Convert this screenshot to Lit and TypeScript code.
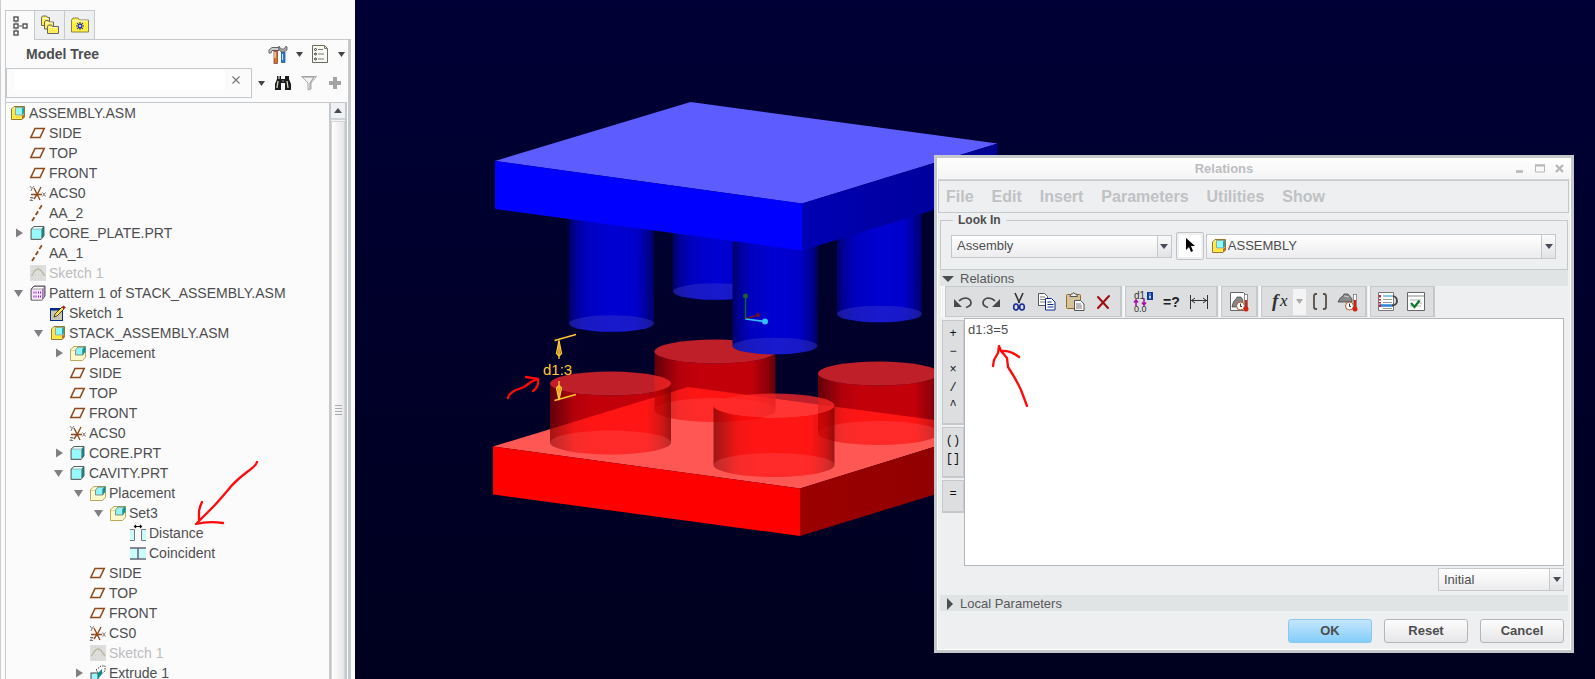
import { LitElement, html, svg, css, nothing } from "lit";
import { customElement, property, state } from "lit/decorators.js";

const asmCube = svg`
  <path d="M2.500 5L5 2.500H15.500V13L13 15.500H2.500Z" fill="#fff27a" stroke="#8a6a1c" stroke-width=".9"/>
  <path d="M3.500 6V14.500H12.500V12H6V5Z" fill="#ffe63a"/>
  <path d="M6.500 3.500H14V11H6.500Z" fill="#8ff8fa" stroke="#777" stroke-width=".6"/>
  <path d="M13 4.500L15 2.500V9.500L13 11Z" fill="#2aa3a6"/>
  <path d="M13 12L15.500 10V13L13 15.500Z" fill="#c06a24"/>`;
const placeCube = svg`
  <path d="M1.500 5.500L5 2.500H16.500V13L13.500 16.500H1.500Z" fill="#fdf9cf" stroke="#b9a75c"/>
  <path d="M6.500 6L9 3H16L14 5.500V11H6.500Z" fill="#8ff3f5" stroke="#666" stroke-width=".7"/>
  <path d="M13.500 5L16.500 2V8L13.500 11Z" fill="#158f94"/>
  <path d="M2 6.500H6" stroke="#e4d98a"/>`;

const treeIcons: Record<string, unknown> = {
  asm: asmCube,
  place: placeCube,
  plane: svg`<path d="M1.800 13.500L6 4.500H15.200L11 13.500Z" fill="none" stroke="#8f4a1c" stroke-width="1.600"/>`,
  csys: svg`
    <path d="M2 10.500H13M5 4L11 16M12 3L9 9L5 15" fill="none" stroke="#8f4a1c" stroke-width="1.400"/>
    <path d="M1 2l2 2.500l2-2.500M3 4.500l-1 2.500M13.500 8.500l3 4M16.500 8.500l-3 4M1 13.500h3l-3 3h3" fill="none" stroke="#6c6c6c" stroke-width=".9"/>`,
  axis: svg`<path d="M3 17L13 1" stroke="#8f4a1c" stroke-width="1.800" stroke-dasharray="4.500 2.500" fill="none"/>`,
  part: svg`
    <path d="M2 5L5 2.500H15V12L12 15.500H2Z" fill="#128a8e" stroke="#555" stroke-width=".9"/>
    <path d="M3 5L5 3H14L12.500 5Z" fill="#eaffff"/>
    <rect x="2.500" y="5" width="10" height="10" fill="#97fafa" stroke="#888" stroke-width=".6"/>`,
  sketchOff: svg`
    <rect x="1" y="1" width="16" height="16" fill="#dededc"/>
    <path d="M3 3h12M3 7h12M3 11h12M3 15h12" stroke="#c9c9c4" stroke-dasharray="1 2"/>
    <path d="M2.500 12L6 6.500Q9 3.500 12 6.500L16 12" fill="none" stroke="#b8b8a0" stroke-width="1.300"/>`,
  pattern: svg`
    <path d="M2 5L5 2H16V12L13 16H2Z" fill="#b98ad6" stroke="#555"/>
    <path d="M3 5L5 3H15L13 5Z" fill="#fff"/>
    <rect x="2.500" y="5" width="11" height="11" fill="#f9e6ff" stroke="#777" stroke-width=".7"/>
    <path d="M4.500 8.500h3M9 8.500h3M4.500 12.500h3M9 12.500h3" stroke="#8a20d8" stroke-width="2" stroke-dasharray="1 1"/>`,
  sketch: svg`
    <rect x="1.500" y="5" width="12" height="11.500" fill="#c9c9b6" stroke="#0a2a88"/>
    <rect x="1" y="4" width="13" height="2.500" fill="#0a2a88"/>
    <path d="M5 13L6 10L13 3L15 5L8 12Z" fill="#ffe14a" stroke="#222" stroke-width=".8"/>
    <path d="M13 3L14.500 1.500L17 3.500L15 5Z" fill="#b0202a"/>`,
  distance: svg`
    <rect x="1" y="5" width="4" height="12" fill="#c9fbfb"/><rect x="13" y="5" width="4" height="12" fill="#c9fbfb"/>
    <path d="M1 5.500h4.500v11M17 5.500h-4.500v11M1 16.500h4.500M12.500 16.500h4.500" fill="none" stroke="#777"/>
    <path d="M5 2.500h8M7 1L5.500 2.500L7 4M11 1L12.500 2.500L11 4" fill="none" stroke="#111" stroke-width="1.100"/>`,
  coincident: svg`
    <rect x="1" y="4" width="16" height="11" fill="#c9fbfb"/>
    <path d="M1 4h16M1 15h16M9 4v11" stroke="#667" fill="none" stroke-width="1.500"/>`,
  extrude: svg`
    <path d="M7 6L12 2H16V7L11 11Z" fill="#fff" stroke="#444" stroke-dasharray="1.500 1"/>
    <rect x="2" y="9" width="7" height="8" fill="#97fafa" stroke="#444"/>
    <path d="M9 9L13 5V10L9 15Z" fill="#128a8e"/>`,
};

type Node = { level: number; icon: string; label: string; open?: boolean; off?: boolean };
const nodes: Node[] = [
  { level: 0, icon: "asm", label: "ASSEMBLY.ASM" },
  { level: 1, icon: "plane", label: "SIDE" },
  { level: 1, icon: "plane", label: "TOP" },
  { level: 1, icon: "plane", label: "FRONT" },
  { level: 1, icon: "csys", label: "ACS0" },
  { level: 1, icon: "axis", label: "AA_2" },
  { level: 1, icon: "part", label: "CORE_PLATE.PRT", open: false },
  { level: 1, icon: "axis", label: "AA_1" },
  { level: 1, icon: "sketchOff", label: "Sketch 1", off: true },
  { level: 1, icon: "pattern", label: "Pattern 1 of STACK_ASSEMBLY.ASM", open: true },
  { level: 2, icon: "sketch", label: "Sketch 1" },
  { level: 2, icon: "asm", label: "STACK_ASSEMBLY.ASM", open: true },
  { level: 3, icon: "place", label: "Placement", open: false },
  { level: 3, icon: "plane", label: "SIDE" },
  { level: 3, icon: "plane", label: "TOP" },
  { level: 3, icon: "plane", label: "FRONT" },
  { level: 3, icon: "csys", label: "ACS0" },
  { level: 3, icon: "part", label: "CORE.PRT", open: false },
  { level: 3, icon: "part", label: "CAVITY.PRT", open: true },
  { level: 4, icon: "place", label: "Placement", open: true },
  { level: 5, icon: "place", label: "Set3", open: true },
  { level: 6, icon: "distance", label: "Distance" },
  { level: 6, icon: "coincident", label: "Coincident" },
  { level: 4, icon: "plane", label: "SIDE" },
  { level: 4, icon: "plane", label: "TOP" },
  { level: 4, icon: "plane", label: "FRONT" },
  { level: 4, icon: "csys", label: "CS0" },
  { level: 4, icon: "sketchOff", label: "Sketch 1", off: true },
  { level: 4, icon: "extrude", label: "Extrude 1", open: false },
];

const base = css`
  :host, :host * { box-sizing: border-box; }
  :host { font-family: "Liberation Sans", Arial, sans-serif; color: #4d4d4f; }
  button { font: inherit; color: inherit; border: 0; padding: 0; margin: 0; background: none; display: flex; align-items: center; justify-content: center; }
  svg { display: block; }
`;

@customElement("model-tree")
class ModelTree extends LitElement {
  @state() private query = "";

  static styles = [base, css`
    :host { display: flex; flex-direction: column; height: 100%; background: #fbfbfb; border-left: 1px solid #c9cdd0; padding: 10px 4px 0; overflow: hidden; }
    .tabs { display: flex; height: 29px; flex: none; }
    .tab { width: 30px; height: 29px; border: 1px solid #c5c9cc; border-bottom: 0; border-left-width: 0; background: #eeeff1; }
    .tab.on { border-left-width: 1px; background: #fbfbfb; height: 30px; z-index: 1; }
    .frame { flex: 1; min-height: 0; display: flex; flex-direction: column; border: 1px solid #c5c9cc; border-right-width: 3px; border-bottom: 0; }
    .head { display: flex; align-items: center; height: 28px; flex: none; padding-left: 20px; }
    h2 { font-size: 14px; line-height: 20px; margin: 0; flex: 1; }
    .find { display: flex; align-items: center; height: 34px; flex: none; padding-bottom: 4px; }
    .box { flex: 1; min-width: 0; display: flex; height: 30px; border: 1px solid #c5c9cc; padding: 1px 5px 7px 7px; }
    .box input { flex: 1; min-width: 0; border: 0; outline: 0; background: #fff; font: 14px "Liberation Sans", sans-serif; }
    .box button { width: 21px; }
    .tool { width: 26px; height: 24px; }
    .drop { width: 18px; height: 24px; }
    .head .tool { width: 28px; }
    .head .drop { width: 14px; }
    .body { flex: 1; min-height: 0; display: flex; border: 1px solid #c5c9cc; border-width: 1px 2px 0 0; margin-right: 1px; }
    ul { list-style: none; margin: 0; padding: 0; flex: 1; min-width: 0; overflow: hidden; font-size: 14px; line-height: 20px; }
    li { display: flex; align-items: center; height: 20px; white-space: nowrap; }
    .twist { width: 20px; height: 20px; flex: none; }
    .icon { flex: none; margin-right: 2px; }
    .off { color: #bcbcbe; }
    .bar { width: 16px; flex: none; display: flex; flex-direction: column; border-left: 2px solid #c5c9cc; background: #f4f4f5; }
    .up { height: 17px; flex: none; background: #f0f1f2; border: 1px solid #d0d3d5; border-width: 0 0 2px; }
    .thumb { flex: 1; display: flex; align-items: center; justify-content: center; padding-top: 20px; margin-top: 1px; border: 1px solid #d2d4d6; border-bottom: 0; background: linear-gradient(90deg, #fff, #e6e6e8); }
  `];

  render() {
    return html`
      <div class="tabs" role="tablist">
        <button class="tab on" role="tab" aria-label="Model tree">
          <svg width="18" height="20" fill="none" stroke="#444" stroke-width="1.300"><rect x="3" y="1" width="4" height="4"/><rect x="3" y="8" width="4" height="4"/><rect x="3" y="15" width="4" height="4"/><rect x="12" y="8" width="4" height="4"/><path d="M5 5v3M5 12v3M7 10h5" stroke="#888"/></svg>
        </button>
        <button class="tab" role="tab" aria-label="Folders">
          <svg width="20" height="20" fill="#ffed5a" stroke="#666"><path d="M1.500 10.500v-8l1-1.500h4l1 1.500h2v8z"/><path d="M4.500 14v-7l1-1.500h3l1 1.500h4v7z"/><path d="M7.500 18.500v-7l1-1.500h3l1 1.500h6v7z"/><path d="M8.500 12.500h9M5.500 8h7M2.500 3.500h6" stroke="#fffbd0"/></svg>
        </button>
        <button class="tab" role="tab" aria-label="Favorites">
          <svg width="18" height="18" fill="#fff23c" stroke="#8d8244"><path d="M.5 16v-12l1.500-2h5l1.500 2h9v12z"/><path d="M1.500 5h15" stroke="#fff"/><path d="M9 6v8M5 10h8M6.200 7.200l5.600 5.600M11.800 7.200l-5.600 5.600" stroke="#1420b8" stroke-width="1.100"/><circle cx="9" cy="10" r="1" fill="#fff" stroke="none"/></svg>
        </button>
      </div>
      <div class="frame">
        <div class="head">
          <h2>Model Tree</h2>
          <button class="tool" aria-label="Settings">
            <svg width="20" height="20"><path d="M1 6l3-2.500h7v3H4L3 9H1z" fill="#ccc" stroke="#555" stroke-width=".9"/><path d="M11 2l2 3h3l2-3 1 1v3l-3 2h-3l-2-3z" fill="#aaa" stroke="#555" stroke-width=".8"/><rect x="6" y="7" width="3.500" height="12.500" fill="#d8731f" stroke="#733" stroke-width=".7"/><path d="M7 8v6" stroke="#fff"/><rect x="13.500" y="8.500" width="3.500" height="10" fill="#2c7fd8" stroke="#124a8a" stroke-width=".7"/><path d="M14.500 10v6" stroke="#bfe0ff"/></svg>
          </button>
          <button class="drop" aria-label="Settings menu"><svg width="7" height="5"><path d="M0 0h7L3.500 5z" fill="#444"/></svg></button>
          <button class="tool" aria-label="Show">
            <svg width="18" height="20"><path d="M1.500 1.500h12l3 3v14h-15z" fill="#fafaf5" stroke="#6a6a60"/><path d="M13.500 1.500v3h3M7 5.500h5M7 10h6M7 15h6" fill="none" stroke="#777"/><g fill="none" stroke="#333"><circle cx="4.500" cy="5.500" r="1"/><circle cx="4.500" cy="10" r="1"/><circle cx="4.500" cy="15" r="1"/></g></svg>
          </button>
          <button class="drop" aria-label="Show menu"><svg width="7" height="5"><path d="M0 0h7L3.500 5z" fill="#444"/></svg></button>
        </div>
        <div class="find">
          <div class="box">
            <input aria-label="Search the tree" .value=${this.query} @input=${(e: InputEvent) => (this.query = (e.target as HTMLInputElement).value)}>
            <button aria-label="Clear" @click=${() => (this.query = "")}><svg width="8" height="8"><path d="M.5 .5l7 7M7.500 .5l-7 7" stroke="#777" stroke-width="1.200"/></svg></button>
          </div>
          <button class="drop" aria-label="Search menu"><svg width="7" height="5"><path d="M0 0h7L3.500 5z" fill="#444"/></svg></button>
          <button class="tool" aria-label="Find">
            <svg width="18" height="16"><path d="M3 1h4v3h4V1h4v3l2 5v6h-6V8H7v7H1V9l2-5z" fill="#1c1c1c"/><path d="M4 6L3 13M13 6l1 7M5 1v3" stroke="#d8d8c8" stroke-width="1.300"/><path d="M8 6h2" stroke="#999"/></svg>
          </button>
          <button class="tool" aria-label="Filter">
            <svg width="18" height="16"><path d="M1.500 1.500h15L11 8v6l-3 1V8z" fill="#f2f2f2" stroke="#aaa"/><path d="M3 2h11L10 8v6" fill="none" stroke="#999"/></svg>
          </button>
          <button class="tool" aria-label="Add"><svg width="12" height="12"><path d="M4 0h4v4h4v4H8v4H4V8H0V4h4z" fill="#a3a3a3"/></svg></button>
        </div>
        <div class="body">
          <ul role="tree" aria-label="Model Tree">
            ${nodes.map(n => html`
              <li role="treeitem" aria-level=${n.level + 1} class=${n.off ? "off" : ""} style="padding-left:${3 + 20 * Math.max(0, n.level - 1)}px">
                ${n.level ? html`<span class="twist">${n.open === undefined ? nothing : html`
                  <svg width="20" height="20"><path d=${n.open ? "M5 7h9L9.500 14z" : "M7 5.500v9l7-4.500z"} fill="#808084"/></svg>`}</span>` : nothing}
                <svg class="icon" width="18" height="18">${treeIcons[n.icon]}</svg>
                <span>${n.label}</span>
              </li>`)}
          </ul>
          <div class="bar">
            <button class="up" aria-label="Scroll up"><svg width="8" height="5"><path d="M0 5h8L4 0z" fill="#4a4a55"/></svg></button>
            <div class="thumb"><svg width="7" height="11"><path d="M0 .5h7M0 3.500h7M0 6.500h7M0 9.500h7" stroke="#a9abad"/></svg></div>
          </div>
        </div>
      </div>`;
  }
}

const pin = (x: number, y: number) => {
  const w = 85, m = x + w / 2;
  return svg`
    <path d="M${x} 198V${y}A${w / 2} 8.300 0 0 0 ${x + w} ${y}V198Z" fill="url(#pin)"/>
    <ellipse cx=${m} cy=${y} rx=${w / 2} ry="8.300" fill="#3c3cc8" fill-opacity=".42"/>`;
};
const boss = (x: number, top: number, bottom: number) => {
  const w = 121, m = x + w / 2;
  return svg`
    <path d="M${x} ${top}V${bottom}A${w / 2} 12 0 0 0 ${x + w} ${bottom}V${top}A${w / 2} 12 0 0 1 ${x} ${top}Z" fill="url(#boss)"/>
    <ellipse cx=${m} cy=${bottom} rx=${w / 2} ry="12" fill="#ff6a6a" fill-opacity=".26"/>
    <ellipse cx=${m} cy=${top} rx=${w / 2} ry="12" fill="#ff2a2a" fill-opacity=".75"/>`;
};

@customElement("model-view")
class ModelView extends LitElement {
  static styles = [base, css`
    :host { display: block; height: 100%; overflow: hidden; background: linear-gradient(#000036, #00001e); }
    .scene { width: 100%; height: 100%; }
    .dim { font-size: 15px; }
  `];
  render() {
    return html`
      <svg class="scene" viewBox="355 0 1240 679" preserveAspectRatio="xMinYMin slice" role="img" aria-label="Mold assembly with dimension d1:3">
        <defs>
          <linearGradient id="pin">
            <stop offset="0" stop-color="#00006a"/><stop offset=".1" stop-color="#0000a0"/><stop offset=".22" stop-color="#0000c0"/>
            <stop offset=".5" stop-color="#0000d2"/><stop offset=".78" stop-color="#0000cc"/><stop offset=".92" stop-color="#000098"/><stop offset="1" stop-color="#000060"/>
          </linearGradient>
          <linearGradient id="boss">
            <stop offset="0" stop-color="#800000" stop-opacity=".75"/><stop offset=".2" stop-color="#ee0000" stop-opacity=".75"/>
            <stop offset=".35" stop-color="#ff0000" stop-opacity=".76"/><stop offset=".8" stop-color="#ff0000" stop-opacity=".76"/>
            <stop offset=".93" stop-color="#c00000" stop-opacity=".75"/><stop offset="1" stop-color="#7c0000" stop-opacity=".75"/>
          </linearGradient>
          <linearGradient id="blueSide"><stop offset="0" stop-color="#0000b4"/><stop offset="1" stop-color="#000090"/></linearGradient>
          <linearGradient id="redSide"><stop offset="0" stop-color="#9c0000"/><stop offset="1" stop-color="#8c0000"/></linearGradient>
        </defs>
        <path d="M493 446.500L688 387L995 428L800 488.500Z" fill="#ff5854"/>
        <path d="M493 446.500L800 488.500V536L493 494.500Z" fill="#f00"/>
        <path d="M800 488.500L995 428V476L800 536Z" fill="url(#redSide)"/>
        ${boss(654.5, 351.5, 410)}
        ${boss(818, 373.5, 433)}
        ${boss(550, 383.5, 442.5)}
        ${boss(713.5, 405.5, 465)}
        ${pin(673, 291.5)}
        ${pin(837, 314)}
        ${pin(569, 323.5)}
        ${pin(732.5, 346)}
        <path d="M495 161L690.500 102L997.500 143.500L802 203.500Z" fill="#5c5cff"/>
        <path d="M495 161L802 203.500V250.500L495 209Z" fill="#00f"/>
        <path d="M802 203.500L997.500 143.500V190.500L802 250.500Z" fill="url(#blueSide)"/>
        <path d="M745.500 296V319" stroke="#146428" stroke-width="1.500"/><circle cx="745.500" cy="296" r="2.500" fill="#146428"/>
        <path d="M745.500 319L758 315" stroke="#701020" stroke-width="1.500"/><circle cx="758" cy="315" r="2" fill="#701020"/>
        <path d="M745.500 319L765 321.500" stroke="#30c0ff" stroke-width="1.500"/><circle cx="765" cy="321.500" r="3" fill="#30c0ff"/>
        <g stroke="#ffc832" stroke-width="1.300" fill="none">
          <path d="M554.500 340.500L576 334.500M559 340.500V359M554.500 400.500L576 394.500M559 381V400"/>
          <path d="M559 340.500l-2.500 13l2.500 2.500l2.500-2.500zM559 400l-2.500-12l2.500-2.500l2.500 2.500z" fill="#ffc832" fill-opacity=".5"/>
        </g>
        <text class="dim" x="543" y="375" fill="#ffc832">d1:3</text>
      </svg>`;
  }
}

const ticon = (name: string, art: unknown) =>
  html`<button class="tb" aria-label=${name}><svg width="22" height="22">${art}</svg></button>`;
const page = svg`<path d="M2.500 1.500h13l4 4v14h-17z" fill="#fff" stroke="#666"/>`;
const thermo = svg`<rect x="16.500" y="3.500" width="3" height="14" fill="#fff" stroke="#777" stroke-width=".8"/><path d="M18 9v8" stroke="#d81e10" stroke-width="2"/><circle cx="18" cy="18" r="2.500" fill="#d81e10"/>`;
const clock = svg`<circle cx="12.500" cy="15" r="4" fill="#fff" stroke="#a85a28"/><path d="M12.500 12.500V15.500h1.500" fill="none" stroke="#333"/>`;

@customElement("relations-dialog")
class RelationsDialog extends LitElement {
  @property() relation = "d1:3=5";

  static styles = [base, css`
    :host { display: block; background: #eeeff1; border: 3px solid #c5c9cc; font-size: 13px; line-height: 16px; }
    .in { border: 1px solid #fff; border-top: 0; }
    .title { display: flex; align-items: center; height: 22px; background: linear-gradient(#fff, #f4f4f5); border-bottom: 1px solid #d4d7d9; }
    h2 { flex: 1; margin: 0; font-size: 13px; text-align: center; color: #bbbdbf; }
    .win { width: 20px; height: 20px; }
    .menu { display: flex; gap: 18px; align-items: center; height: 33px; padding: 0 7px; border: 1px solid #c5c9cc; font-size: 16px; font-weight: bold; color: #bfc1c3; margin-right: 1px; }
    fieldset { margin: 0 2px; padding: 5px 11px 9px 10px; border: 1px solid #c5c9cc; min-width: 0; }
    legend { margin-left: 2px; padding: 0 5px; font-size: 12px; line-height: 14px; font-weight: bold; }
    .look { display: flex; align-items: center; height: 28px; }
    .sel { display: flex; align-items: center; position: relative; height: 23px; border: 1px solid #c5c9cc; background: linear-gradient(#fff, #ececee); }
    .sel select { flex: 1; width: 100%; height: 100%; appearance: none; border: 0; outline: 0; background: none; font: inherit; color: inherit; padding: 0 18px 0 5px; }
    .arrow { position: absolute; right: 0; top: 0; bottom: 0; width: 14px; border-left: 1px solid #c5c9cc; display: flex; align-items: center; justify-content: center; pointer-events: none; background: linear-gradient(#fafafa, #e2e3e5); }
    .scope { flex: 220; min-width: 0; }
    .model { flex: 350; min-width: 0; height: 25px; }
    .model select { padding-left: 0; }
    .model .lead { flex: none; margin-left: 3px; }
    .pick { width: 28px; height: 28px; margin: 0 2px 0 4px; border: 1px solid #c0c3c6; border-radius: 2px; background: #fff; flex: none; box-shadow: inset 0 0 0 2px #f0f0f1; }
    .sect { display: flex; height: 16px; margin: 0 2px; padding: 1px 0 0 2px; background: #e0e4e5; align-items: center; color: #58585a; }
    .sect button { gap: 6px; height: 16px; }
    .bars { display: flex; gap: 3px; padding-left: 3px; height: 31px; margin-left: 3px; border-left: 1px solid #fff; }
    .grp { display: flex; align-items: center; background: #dcdedf; border: 1px solid #c5c9cc; border-right-width: 2px; padding: 0 3px; box-shadow: -2px 0 0 #f8f8f9; }
    .tb { width: 28px; height: 28px; }
    .fdrop { width: 13px; height: 26px; background: #f4f4f5; }
    .edit { display: flex; height: 248px; padding: 0 6px 0 4px; margin-top: 1px; }
    .ops { width: 22px; flex: none; display: flex; flex-direction: column; gap: 2px; padding-top: 2px; }
    .ops div { background: #dcdedf; border: 1px solid #c5c9cc; border-bottom-width: 2px; padding: 4px 0 8px; }
    .ops button { width: 100%; height: 18px; color: #111; font: 12px "Liberation Mono", monospace; }
    textarea { flex: 1; min-width: 0; resize: none; margin: 0; border: 1px solid #b4b7ba; outline: 0; background: #fff; font: inherit; color: inherit; padding: 3px 3px; border-radius: 0; }
    .stage { display: flex; justify-content: flex-end; padding: 2px 6px 4px; }
    .stage .sel { width: 126px; }
    .acts { display: flex; justify-content: flex-end; gap: 12px; padding: 8px 6px 6px; }
    .acts button { width: 84px; height: 24px; font-weight: bold; border: 1px solid #b4b7ba; border-radius: 3px; background: linear-gradient(#fdfdfd, #e6e6e8); }
    .acts .ok { border-color: #8cc8ee; background: linear-gradient(#c4e6fc, #84cdfa); }
    .serif { font-family: "Liberation Serif", serif; font-style: italic; }
    .bold { font-weight: bold; }
  `];

  render() {
    const arrow = html`<span class="arrow"><svg width="8" height="5"><path d="M0 0h8L4 5z" fill="#4a4a55"/></svg></span>`;
    return html`
      <div class="in" role="dialog" aria-label="Relations">
        <div class="title">
          <h2>Relations</h2>
          <button class="win" aria-label="Minimize"><svg width="10" height="10"><path d="M1 7.500h7" stroke="#b5b7b9" stroke-width="2.500"/></svg></button>
          <button class="win" aria-label="Maximize"><svg width="10" height="9"><path d="M.5 1v7h9V1M0 1h10" fill="none" stroke="#b5b7b9"/><path d="M0 1.500h10" stroke="#b5b7b9" stroke-width="2"/></svg></button>
          <button class="win" aria-label="Close"><svg width="10" height="9"><path d="M1 1l7 7M8 1l-7 7" stroke="#b5b7b9" stroke-width="2.300"/></svg></button>
        </div>
        <nav class="menu">${["File", "Edit", "Insert", "Parameters", "Utilities", "Show"].map(m => html`<button>${m}</button>`)}</nav>
        <fieldset>
          <legend>Look In</legend>
          <div class="look">
            <div class="sel scope"><select aria-label="Object type"><option>Assembly</option></select>${arrow}</div>
            <button class="pick" aria-label="Select object"><svg width="10" height="16"><path d="M1 0v12l3-3 2 5 2-1-2-5h4z" fill="#000"/></svg></button>
            <div class="sel model"><svg class="lead" width="18" height="18">${asmCube}</svg><select aria-label="Model"><option>ASSEMBLY</option></select>${arrow}</div>
          </div>
        </fieldset>
        <div class="sect"><button aria-expanded="true"><svg width="12" height="6"><path d="M0 0h12L6 6z" fill="#4d4d4f"/></svg>Relations</button></div>
        <div class="bars" role="toolbar" aria-label="Relation tools">
          <div class="grp">
            ${ticon("Undo", svg`<path d="M7 10Q10 7 14 7Q19 8 19 12Q19 15 14 16.500" fill="none" stroke="#4a4a4c" stroke-width="1.700"/><path d="M2 8v8h8z" fill="#4a4a4c"/>`)}
            ${ticon("Redo", svg`<path d="M15 10Q12 7 8 7Q3 8 3 12Q3 15 8 16.500" fill="none" stroke="#4a4a4c" stroke-width="1.700"/><path d="M20 8v8h-8z" fill="#4a4a4c"/>`)}
            ${ticon("Cut", svg`<path d="M7 2l4.500 10M15 2l-4.500 10" stroke="#333" stroke-width="1.600" fill="none"/><g fill="none" stroke="#1a2a98" stroke-width="1.600"><ellipse cx="8" cy="16" rx="2.300" ry="3"/><ellipse cx="14" cy="16" rx="2.300" ry="3"/></g>`)}
            ${ticon("Copy", svg`<path d="M2.500 2.500h6l3 3v9h-9z" fill="#fff" stroke="#555"/><path d="M4 6h5M4 8.500h6M4 11h5" stroke="#777"/><path d="M9.500 7.500h6l3.500 3.500v8h-9.500z" fill="#fff" stroke="#0a2a88"/><path d="M11.500 11h4M11.500 13.500h6M11.500 16h6" stroke="#0a2a88"/>`)}
            ${ticon("Paste", svg`<rect x="2.500" y="3.500" width="14" height="14" rx="1" fill="#d3c49c" stroke="#9a6a24"/><path d="M6 5.500l1-2.500h1.500L9.500 1.500 11 3h1.500l1 2.500z" fill="#eee" stroke="#555"/><path d="M10.500 9.500h6l3.500 3.500v6.500h-9.500z" fill="#fff" stroke="#555"/><path d="M12 13h5M12 15h6M12 17h6" stroke="#777"/>`)}
            ${ticon("Delete", svg`<path d="M6 6L16 17M17 5L6 17" stroke="#9c0c10" stroke-width="2" stroke-linecap="round"/>`)}
          </div>
          <div class="grp">
            ${ticon("Switch dimensions", svg`<text x="2" y="8" font-size="10" fill="#333">d1</text><text x="2" y="21" font-size="9" fill="#333">0.0</text><path d="M4 15V9M2 11.500l2-2.500 2 2.500M12 8v6M10 11.500l2 2.500 2-2.500" stroke="#a010a8" stroke-width="1.500" fill="none"/><rect x="15" y="1" width="6" height="8" fill="#0a3a9c"/><path d="M18 2.500v1M18 4.500v3" stroke="#fff" stroke-width="1.500"/>`)}
            ${ticon("Evaluate", svg`<text class="bold" x="3" y="16" font-size="14" fill="#222">=?</text>`)}
            ${ticon("Show dimension", svg`<path d="M2.500 4v14M19.500 4v14M3 9.500h16M7 7l-3.500 2.500L7 12M15 7l3.500 2.500-3.500 2.500" fill="none" stroke="#333"/>`)}
          </div>
          <div class="grp">
            ${ticon("Units", svg`${page}<path d="M4 16q1-7 4-8l1-2h4l2 3v7z" fill="#888" stroke="#444" stroke-width=".7"/>${clock}${thermo}`)}
          </div>
          <div class="grp">
            <button class="tb" aria-label="Insert function"><svg width="22" height="22"><text class="serif bold" x="4" y="16" font-size="19" fill="#333">f</text><text class="serif" x="12" y="15" font-size="17" fill="#222">x</text></svg></button>
            <button class="fdrop" aria-label="Function menu"><svg width="7" height="5"><path d="M0 0h7L3.500 5z" fill="#aaa"/></svg></button>
            ${ticon("Brackets", svg`<path d="M8 3H7Q5 3 5 5V16Q5 18 7 18H8M14 3H15Q17 3 17 5V16Q17 18 15 18H14" fill="none" stroke="#55504a" stroke-width="1.800"/>`)}
            ${ticon("Parameters", svg`<path d="M1 11q2-5 5-6l1-2h4l4 5v3z" fill="#888" stroke="#444" stroke-width=".8"/><path d="M7 5l5 1" stroke="#ccc"/>${clock}${thermo}`)}
          </div>
          <div class="grp">
            ${ticon("Sort", svg`<path d="M1.500 1.500h15v18h-15z" fill="#fff" stroke="#777"/><path d="M6 8.500h9M6 11.500h9M6 17.500h9" stroke="#999"/><path d="M6 5h10" stroke="#8cc4f0" stroke-width="2"/><path d="M3 14.500h13" stroke="#2c84d8" stroke-width="2.500"/><path d="M3 4v2.500M3 8v1.500M3 11v1.500M3 13.500v2.500" stroke="#c22" stroke-width="2"/><path d="M16 5q4 1 4 5t-5 4.500" fill="none" stroke="#444" stroke-width="1.800"/>`)}
            ${ticon("Verify", svg`<path d="M2.500 1.500h17v18h-17z" fill="#fff" stroke="#666"/><path d="M3 5h16" stroke="#888"/><path d="M5 9h11M5 15h11M12 12h5" stroke="#aaa"/><path d="M6 12l3.500 4L14.500 9.500" fill="none" stroke="#0c7a2c" stroke-width="2.200"/>`)}
          </div>
        </div>
        <div class="edit">
          <div class="ops">
            ${[["+", "−", "×", "/", "^"], ["()", "[]"], ["="]].map(g => html`<div>${g.map(o => html`<button>${o}</button>`)}</div>`)}
          </div>
          <textarea aria-label="Relations" spellcheck="false" .value=${this.relation}></textarea>
        </div>
        <div class="stage"><div class="sel"><select aria-label="Evaluation stage"><option>Initial</option></select>${arrow}</div></div>
        <div class="sect"><button aria-expanded="false"><svg width="12" height="12"><path d="M5 0v12l6-6z" fill="#4d4d4f"/></svg>Local Parameters</button></div>
        <div class="acts"><button class="ok">OK</button><button>Reset</button><button>Cancel</button></div>
      </div>`;
  }
}

@customElement("app-root")
class AppRoot extends LitElement {
  static styles = [base, css`
    :host { display: grid; grid-template-columns: 355px minmax(0, 1fr); height: 100vh; position: relative; overflow: hidden; }
    .view { position: relative; min-width: 0; min-height: 0; }
    model-tree { min-height: 0; }
    relations-dialog { position: absolute; left: 579px; top: 155px; width: 640px; }
    .ink { position: absolute; left: 0; top: 0; width: 100%; height: 100%; overflow: visible; pointer-events: none; }
  `];
  render() {
    return html`
      <model-tree></model-tree>
      <main class="view">
        <model-view></model-view>
        <relations-dialog></relations-dialog>
      </main>
      <svg class="ink" fill="none" stroke="#ff0a0a" stroke-width="2.300" stroke-linecap="round" stroke-linejoin="round" aria-hidden="true">
        <path d="M257 462Q256 466 247 472Q234 482 228 490Q218 502 212 508L197 523M202 502Q199 508 199 513L199 521M196 524Q208 521 223 523"/>
        <path d="M508 398Q509 393 516 390L524 387L531 382L538 379M526 377L538 379Q539 387 533 391"/>
        <path d="M1027 406L1021 390Q1016 379 1008 367L1007 358L1001 351L999 346L998 353L994 360L993 366M1001 351Q1010 350 1019 357"/>
      </svg>`;
  }
}
